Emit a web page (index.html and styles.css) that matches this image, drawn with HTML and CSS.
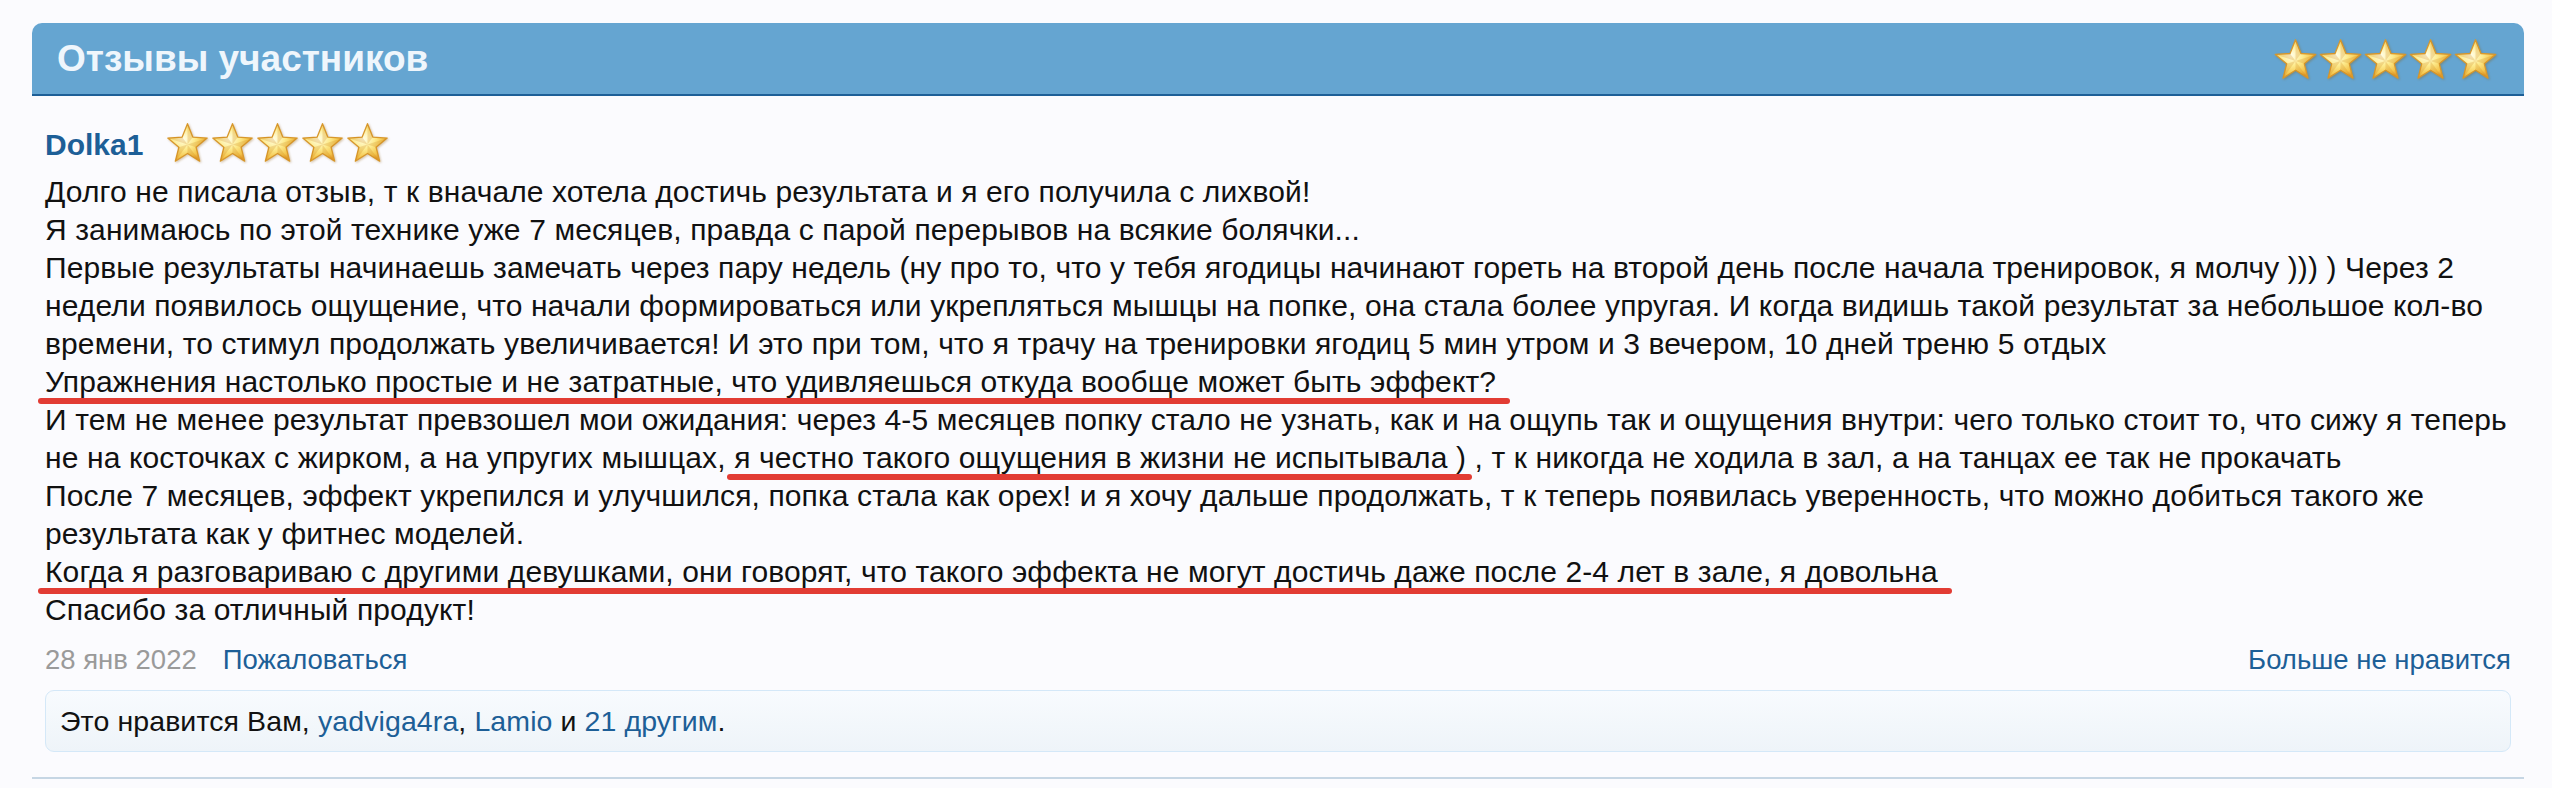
FILE: index.html
```html
<!DOCTYPE html>
<html lang="ru">
<head>
    <meta charset="UTF-8">
    <meta name="viewport" content="width=device-width, initial-scale=1.0">
    <title>Отзывы участников</title>
    <link rel="stylesheet" href="styles.css">
</head>
<body>
    <svg class="svg-defs" width="0" height="0" aria-hidden="true">
        <defs>
            <radialGradient id="starFill" cx="40%" cy="40%" r="62%">
                <stop offset="0" stop-color="#fffee6"/>
                <stop offset="0.45" stop-color="#fdeb8e"/>
                <stop offset="0.8" stop-color="#f4c64e"/>
                <stop offset="1" stop-color="#e39d2c"/>
            </radialGradient>
            <symbol id="star" viewBox="0 0 100 95">
                <path d="M50 4 L62.3 35 L95.7 37.2 L70 58.5 L78.2 90.8 L50 73 L21.8 90.8 L30 58.5 L4.3 37.2 L37.7 35 Z"
                      fill="url(#starFill)" stroke="#d8982c" stroke-width="3" stroke-linejoin="round"/>
                <path d="M50 52 L50 4 L62.3 35 Z M50 52 L95.7 37.2 L70 58.5 Z M50 52 L78.2 90.8 L50 73 Z M50 52 L21.8 90.8 L30 58.5 Z M50 52 L4.3 37.2 L37.7 35 Z"
                      fill="#c97d12" opacity="0.22"/>
            </symbol>
        </defs>
    </svg>

    <div class="reviews">
        <div class="reviews-head">
            <h2 class="reviews-title">Отзывы участников</h2>
            <div class="stars stars-big">
                <svg class="star"><use href="#star"/></svg>
                <svg class="star"><use href="#star"/></svg>
                <svg class="star"><use href="#star"/></svg>
                <svg class="star"><use href="#star"/></svg>
                <svg class="star"><use href="#star"/></svg>
            </div>
        </div>

        <div class="review">
            <div class="review-author">
                <a class="author-name" href="#">Dolka1</a>
                <div class="stars">
                    <svg class="star"><use href="#star"/></svg>
                    <svg class="star"><use href="#star"/></svg>
                    <svg class="star"><use href="#star"/></svg>
                    <svg class="star"><use href="#star"/></svg>
                    <svg class="star"><use href="#star"/></svg>
                </div>
            </div>

            <p class="review-text">Долго не писала отзыв, т к вначале хотела достичь результата и я его получила с лихвой!<br>Я занимаюсь по этой технике уже 7 месяцев, правда с парой перерывов на всякие болячки...<br>Первые результаты начинаешь замечать через пару недель (ну про то, что у тебя ягодицы начинают гореть на второй день после начала тренировок, я молчу ))) ) Через 2<br>недели появилось ощущение, что начали формироваться или укрепляться мышцы на попке, она стала более упругая. И когда видишь такой результат за небольшое кол-во<br>времени, то стимул продолжать увеличивается! И это при том, что я трачу на тренировки ягодиц 5 мин утром и 3 вечером, 10 дней треню 5 отдых<br><span class="mark">Упражнения настолько простые и не затратные, что удивляешься откуда вообще может быть эффект?</span><br>И тем не менее результат превзошел мои ожидания: через 4-5 месяцев попку стало не узнать, как и на ощупь так и ощущения внутри: чего только стоит то, что сижу я теперь<br>не на косточках с жирком, а на упругих мышцах, <span class="mark mark-short">я честно такого ощущения в жизни не испытывала )</span> , т к никогда не ходила в зал, а на танцах ее так не прокачать<br>После 7 месяцев, эффект укрепился и улучшился, попка стала как орех! и я хочу дальше продолжать, т к теперь появилась уверенность, что можно добиться такого же<br>результата как у фитнес моделей.<br><span class="mark">Когда я разговариваю с другими девушками, они говорят, что такого эффекта не могут достичь даже после 2-4 лет в зале, я довольна</span><br>Спасибо за отличный продукт!</p>

            <div class="review-meta">
                <span class="review-date">28 янв 2022</span>
                <a class="review-report" href="#">Пожаловаться</a>
                <a class="review-unlike" href="#">Больше не нравится</a>
            </div>

            <div class="review-likes">
                Это нравится Вам, <a href="#">yadviga4ra</a>, <a href="#">Lamio</a> и <a href="#">21 другим</a>.
            </div>
        </div>
    </div>
</body>
</html>
```

FILE: styles.css
```css
body {
    margin: 0;
    background: #fbfbfe;
    font-family: "Liberation Sans", Arial, sans-serif;
    color: #111;
}
a {
    color: #1d5f97;
    text-decoration: none;
}
.svg-defs {
    position: absolute;
    width: 0;
    height: 0;
}
.reviews {
    margin: 23px 28px 0 32px;
}
.reviews-head {
    display: flex;
    align-items: center;
    justify-content: space-between;
    height: 71px;
    padding: 0 26px 0 25px;
    background: #65a5d1;
    border-bottom: 2px solid #1d5f97;
    border-radius: 10px 10px 0 0;
}
.reviews-title {
    margin: 0;
    font-size: 37px;
    line-height: 1;
    font-weight: bold;
    color: #eff6fc;
}
.stars {
    display: flex;
}
.star {
    width: 45px;
    height: 41px;
    filter: drop-shadow(1px 1px 1px rgba(140, 90, 10, 0.35));
}
.stars-big .star {
    width: 45px;
    height: 42px;
}
.review {
    padding: 0 13px 25px;
    border-bottom: 2px solid #c6d6e4;
}
.review-author {
    display: flex;
    align-items: center;
    gap: 22px;
    margin-top: 26px;
}
.author-name {
    padding-top: 5px;
    font-size: 30px;
    line-height: 1;
    font-weight: bold;
}
.review-text {
    margin: 10px 0 0;
    font-size: 30px;
    line-height: 38px;
    letter-spacing: 0.12px;
    white-space: nowrap;
}
.mark {
    position: relative;
}
.mark::after {
    content: "";
    position: absolute;
    left: -7px;
    right: -14px;
    top: 33px;
    height: 6px;
    border-radius: 3px;
    background: #e23c34;
}
.mark-short::after {
    right: -6px;
}
.review-meta {
    display: flex;
    align-items: baseline;
    margin-top: 16px;
    font-size: 27.5px;
    line-height: 30px;
}
.review-date {
    color: #9a9a9a;
}
.review-report {
    margin-left: 26px;
}
.review-unlike {
    margin-left: auto;
}
.review-likes {
    margin-top: 15px;
    padding: 15px 14px;
    border: 1px solid #d4e8f8;
    border-radius: 9px;
    background: linear-gradient(#f8fbfe, #eef4f9);
    font-size: 28.5px;
    line-height: 30px;
    letter-spacing: 0.1px;
}
```
